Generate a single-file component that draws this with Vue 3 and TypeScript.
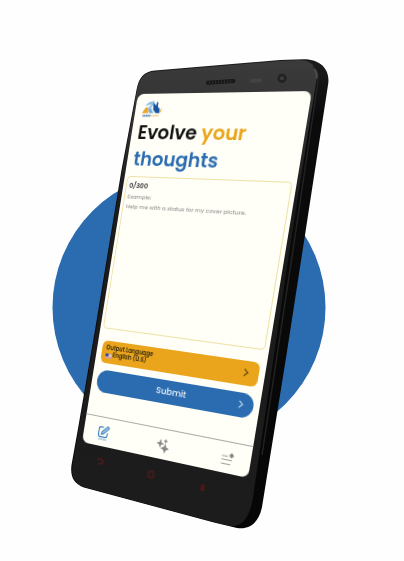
<script setup lang="ts">
import { computed, onBeforeUnmount, onMounted, ref } from 'vue'

type Point = [number, number]

// Size of the artwork's coordinate space and of the plane laid on the phone
const ART_WIDTH = 404
const PLANE_WIDTH = 180
const PLANE_HEIGHT = 360

// Corners of the phone's display in artwork units, clockwise from top left
const corners: Point[] = [
  [138, 94],
  [312, 91],
  [248, 478],
  [82, 442],
]

const stage = ref<HTMLElement | null>(null)
const stageWidth = ref(ART_WIDTH)
const message = ref('')
const maxLength = 300
let observer: ResizeObserver | undefined

// Projects the flat screen onto the four display corners
const projection = computed(() => {
  const k = stageWidth.value / ART_WIDTH
  const [p0, p1, p2, p3] = corners.map(([x, y]): Point => [x * k, y * k])
  const dx1 = p1[0] - p2[0]
  const dx2 = p3[0] - p2[0]
  const dy1 = p1[1] - p2[1]
  const dy2 = p3[1] - p2[1]
  const sx = p0[0] - p1[0] + p2[0] - p3[0]
  const sy = p0[1] - p1[1] + p2[1] - p3[1]
  const det = dx1 * dy2 - dx2 * dy1
  const g = (sx * dy2 - dx2 * sy) / det
  const h = (dx1 * sy - sx * dy1) / det
  const col1 = [p1[0] - p0[0] + g * p1[0], p1[1] - p0[1] + g * p1[1], 0, g].map(n => n / PLANE_WIDTH)
  const col2 = [p3[0] - p0[0] + h * p3[0], p3[1] - p0[1] + h * p3[1], 0, h].map(n => n / PLANE_HEIGHT)
  return `matrix3d(${[...col1, ...col2, 0, 0, 1, 0, p0[0], p0[1], 0, 1].join(',')})`
})

onMounted(() => {
  if (!stage.value) return
  stageWidth.value = stage.value.clientWidth
  observer = new ResizeObserver(([entry]) => {
    stageWidth.value = entry.contentRect.width
  })
  observer.observe(stage.value)
})

onBeforeUnmount(() => observer?.disconnect())
</script>

<template>
  <main ref="stage" class="stage">
    <svg class="artwork" viewBox="0 0 404 561" aria-hidden="true">
      <defs>
        <linearGradient id="face" x1="0" y1="0" x2="0" y2="1">
          <stop offset="0" stop-color="#3b3b3b" />
          <stop offset="0.1" stop-color="#343434" />
          <stop offset="0.3" stop-color="#1b1b1b" />
          <stop offset="1" stop-color="#1c1c1c" />
        </linearGradient>
        <linearGradient id="edge" x1="0" y1="0" x2="0" y2="1">
          <stop offset="0" stop-color="#1c1c1c" />
          <stop offset="0.12" stop-color="#0b0b0b" />
          <stop offset="1" stop-color="#060606" />
        </linearGradient>
      </defs>
      <circle cx="189" cy="307.5" r="136.5" fill="#2b6cb0" />
      <path
        d="M136.500 90C139 77 144 71.500 155 70.500L280 60L303 59.200C318 59 330 67 328.300 83L305 235L286 358L262 507C259 522 250 530 237 528L214 522.500L84 487.500C74 484 70 477 71.500 465L78.300 427L95 330L121.500 170Z"
        fill="url(#edge)"
      />
      <path
        d="M137 90C139.500 78 144.500 72.300 155 71.500L280 61L299 60.300C312 60 317.500 67 316.500 79L289 253L254 490C252 510 246 527 231 526L214 522L84 487C74.500 483.500 71 477 72.500 465L79 427L96 330L122.300 170Z"
        fill="url(#face)"
      />
      <path d="M313 66C319 71 319 77 317 88L293 250L262 455" fill="none" stroke="#222" stroke-width="1.500" />
      <path d="M315 70q2.500 4 1.500 8" fill="none" stroke="#4a4a4a" stroke-width="2" stroke-linecap="round" />
      <path d="M208 82.800L233.500 81" stroke="#181818" stroke-width="4" stroke-linecap="round" />
      <path d="M209 82.800L233 81" stroke="#303030" stroke-width="2.500" stroke-dasharray="1 2" />
      <path d="M252 80.800L260 80.300" stroke="#444" stroke-width="4" stroke-linecap="round" />
      <circle cx="282" cy="78.300" r="4.600" fill="#222" />
      <circle cx="282" cy="78.300" r="2" fill="#3c3d42" />
      <g fill="none" stroke="#451a1a" stroke-width="2">
        <path d="M97 458.500L101.500 459.500Q104 461.500 102 464L98.500 463.500" />
        <rect x="148.500" y="471.500" width="5" height="6" rx="1.500" />
        <path d="M203 484.500L202 491" stroke-width="4.500" />
      </g>
    </svg>

    <div class="plane" :style="{ transform: projection }">
      <div class="screen">
        <header class="intro">
          <svg class="logo" viewBox="0 0 52 38" role="img" aria-label="Logo">
            <path d="M2 28L10 15L15 15L18 28Z" fill="#e8a62a" />
            <path d="M7 12L16 4L29 1L28 14L20 9Z" fill="#8dbfe2" />
            <path d="M15 15L22 11L31 28L20 28Z" fill="#73add9" />
            <path d="M27 5L35 12V3L39 6V15L44 18L45 28H36L29 21Z" fill="#1754a0" />
            <path d="M8 13L24 17L29 27" fill="none" stroke="#fff" stroke-width="1.500" />
            <path d="M43 25L48 20L51 14L47 27Z" fill="#e8a62a" />
            <path d="M5 34H24" stroke="#326fae" stroke-width="4" stroke-dasharray="3 1" />
            <path d="M25 34H45" stroke="#e7bd62" stroke-width="3" stroke-dasharray="4 1" />
          </svg>
          <h1 class="title">Evolve <span class="gold">your</span><br /><span class="blue">thoughts</span></h1>
        </header>

        <form class="composer" @submit.prevent>
          <div class="message">
            <label class="count" for="message">{{ message.length }}/{{ maxLength }}</label>
            <textarea
              id="message"
              v-model="message"
              class="field"
              :maxlength="maxLength"
              placeholder="Example:&#10;Help me with a status for my cover picture."
            ></textarea>
          </div>

          <div class="actions">
            <button class="action language" type="button">
              <span class="language-text">
                <span>Output Language</span>
                <span class="choice">
                  <svg class="flag" viewBox="0 0 14 10" aria-hidden="true">
                    <path d="M0 0H14V10H0Z" fill="#eee" />
                    <path d="M0 1H14M0 4H14M0 7H14M0 9.500H14" stroke="#c54b55" stroke-width="1.200" />
                    <path d="M0 0H7V6H0Z" fill="#344f91" />
                  </svg>
                  English (U.S)
                </span>
              </span>
              <svg class="chevron" viewBox="0 0 10 16" aria-hidden="true"><path d="M1.500 1.500L8.500 8L1.500 14.500" /></svg>
            </button>
            <button class="action submit" type="submit">
              <span>Submit</span>
              <svg class="chevron" viewBox="0 0 10 16" aria-hidden="true"><path d="M1.500 1.500L8.500 8L1.500 14.500" /></svg>
            </button>
          </div>
        </form>

        <nav class="tabs">
          <a class="tab active" href="#write" aria-label="Write">
            <svg viewBox="0 0 28 30" aria-hidden="true">
              <path d="M13 3H7Q3 3 3 7V19Q3 23 7 23H19Q23 23 23 19V14" fill="none" stroke="currentColor" stroke-width="2.500" />
              <path d="M9 18L10.500 12.500L21 2Q23 0 25 2Q27 4 25 6L14.500 16.500Z" fill="#9ec3df" stroke="currentColor" stroke-width="2" />
              <path d="M4 28H23" stroke="#a9cbe3" stroke-width="3" />
            </svg>
          </a>
          <a class="tab" href="#ideas" aria-label="Ideas">
            <svg viewBox="0 0 28 30" aria-hidden="true" fill="currentColor">
              <path d="M8 5L10 10L15 12L10 14L8 19L6 14L1 12L6 10Z" stroke="currentColor" />
              <path d="M19 12L21.500 18L27 20.500L21.500 23L19 29L16.500 23L11 20.500L16.500 18Z" stroke="currentColor" />
              <path d="M19 1L20.500 4.500L24 6L20.500 7.500L19 11L17.500 7.500L14 6L17.500 4.500Z" />
            </svg>
          </a>
          <a class="tab" href="#more" aria-label="More">
            <svg viewBox="0 0 28 30" aria-hidden="true" fill="none" stroke="currentColor" stroke-width="1.500">
              <path d="M3 10H15M3 17H24M3 25H22" />
              <path d="M22 4L26 8L22 12L18 8Z" fill="currentColor" />
            </svg>
          </a>
        </nav>
      </div>
    </div>
  </main>
</template>

<style>
body {
  margin: 0;
  background: #fefefe;
}
</style>

<style scoped>
.stage {
  position: relative;
  max-width: 640px;
  margin: 0 auto;
  overflow: hidden;
  font-family: Poppins, Inter, 'Liberation Sans', sans-serif;
}

.artwork {
  display: block;
  width: 100%;
}

/* Half-scale sheet that is projected onto the phone's display */
.plane {
  position: absolute;
  top: 0;
  left: 0;
  width: 180px;
  height: 360px;
  transform-origin: 0 0;
}

/* The app keeps a regular mobile viewport inside the sheet */
.screen {
  display: flex;
  flex-direction: column;
  box-sizing: border-box;
  width: 360px;
  height: 720px;
  border-radius: 14px;
  background: #fffff7;
  color: #111;
  zoom: 0.5;
}

.intro {
  padding: 11px 14px 0;
}

.logo {
  display: block;
  width: 48px;
  height: 38px;
}

.title {
  margin: 2px 0 0;
  font-size: 40px;
  font-weight: 600;
  line-height: 55px;
}

.gold {
  color: #eaa51c;
}

.blue {
  color: #2b6cb0;
}

.composer {
  display: flex;
  flex: 1;
  flex-direction: column;
  gap: 24px;
  padding: 7px 8px 0 6px;
}

.message {
  display: flex;
  flex-direction: column;
  box-sizing: border-box;
  height: 314px;
  padding: 8px 6px;
  border: 2px solid #eee1a6;
  border-radius: 8px;
}

.count {
  font-size: 14px;
  font-weight: 600;
  line-height: 20px;
  color: #333;
}

.field {
  flex: 1;
  padding: 2px 0 0;
  border: 0;
  outline: 0;
  resize: none;
  background: transparent;
  font: 500 12px/20px Poppins, Inter, 'Liberation Sans', sans-serif;
  color: #333;
}

.field::placeholder {
  color: #999;
  opacity: 1;
}

.actions {
  display: flex;
  flex-direction: column;
  gap: 15px;
  padding: 0 5px;
}

.action {
  display: flex;
  align-items: center;
  height: 45px;
  padding: 0 20px 0 10px;
  border: 0;
  font-family: inherit;
  text-align: left;
}

.language {
  justify-content: space-between;
  border-radius: 12px;
  background: #eaa51c;
  color: #33280f;
}

.language-text {
  display: flex;
  flex-direction: column;
  font-size: 12px;
  font-weight: 600;
  line-height: 15px;
}

.choice {
  display: flex;
  align-items: center;
  gap: 3px;
}

.flag {
  width: 14px;
  height: 10px;
}

.submit {
  display: grid;
  grid-template-columns: 1fr auto 1fr;
  padding: 0 20px;
  border-radius: 24px;
  background: #2b6cb0;
  color: #e8f1f8;
  font-size: 18px;
  font-weight: 500;
}

.submit span {
  grid-column: 2;
}

.submit .chevron {
  justify-self: end;
}

.chevron {
  width: 10px;
  height: 16px;
  fill: none;
  stroke: currentColor;
  stroke-width: 2;
}

.tabs {
  display: flex;
  justify-content: space-between;
  box-sizing: border-box;
  height: 60px;
  padding: 16px 32px 0;
  border-top: 2px solid #aaa;
}

.tab {
  color: #858585;
}

.tab svg {
  display: block;
  width: 28px;
  height: 30px;
}

.active {
  color: #397db8;
}
</style>
